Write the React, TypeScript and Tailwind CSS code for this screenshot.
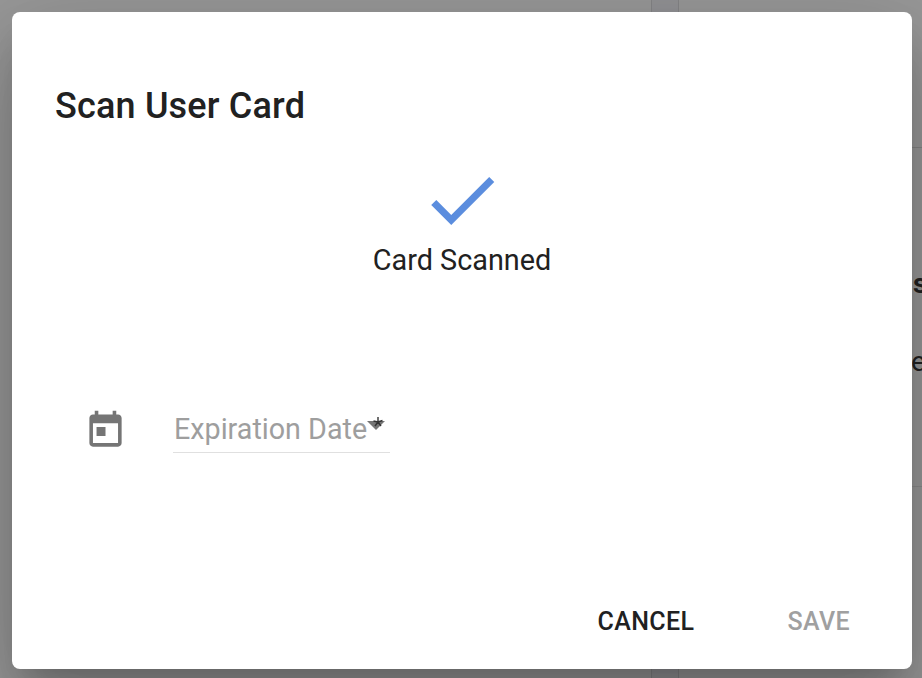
import clsx from 'clsx'

interface IconProperties {
    className?: string
}

function CheckIcon(props: IconProperties) {
    return (
        <svg viewBox="0 0 24 24" fill="currentColor" className={props.className}>
            <path d="M9 16.17 4.83 12l-1.42 1.41L9 19 21 7l-1.41-1.41z" />
        </svg>
    )
}

function TodayIcon(props: IconProperties) {
    return (
        <svg viewBox="0 0 24 24" fill="currentColor" className={props.className}>
            <path d="M19 3h-1V1h-2v2H8V1H6v2H5c-1.11 0-1.99.9-1.99 2L3 19c0 1.1.89 2 2 2h14c1.1 0 2-.9 2-2V5c0-1.1-.9-2-2-2zm0 16H5V8h14v11zM7 10h5v5H7z" />
        </svg>
    )
}

const actions = [
    { name: 'CANCEL', disabled: false },
    { name: 'SAVE', disabled: true },
]

// Page behind the dialog, already dimmed by the backdrop
function Backdrop() {
    return (
        <div className="absolute inset-0 flex bg-[#939396]" aria-hidden="true">
            <div className="w-[652px] border-r border-[#858587] bg-[#999999]" />
            <div className="ml-[26px] flex flex-1 flex-col items-end overflow-hidden border-l border-[#858587] bg-[#999999] text-[28px] leading-8 text-[#222222]">
                <div className="h-[148px] w-full border-b border-[#858585]" />
                <div className="h-[339px] w-full border-b border-[#8b8b8b] pl-[234px] pt-[120px]">
                    <div className="font-bold">s</div>
                    <div className="-ml-[2px] mt-[46px]">e</div>
                </div>
            </div>
        </div>
    )
}

export default function App() {
    return (
        <div className="relative h-[678px] w-[922px] overflow-hidden px-3 pt-3 font-['Roboto',sans-serif] text-[#212121]">
            <Backdrop />
            <div
                role="dialog"
                className="relative flex h-[657px] w-[900px] flex-col rounded-lg bg-white shadow-[0_22px_30px_-14px_rgba(0,0,0,0.2),0_48px_76px_6px_rgba(0,0,0,0.14),0_18px_92px_16px_rgba(0,0,0,0.12)]"
            >
                <h2 className="ml-[43px] mt-[73px] text-[36px] font-medium leading-[42px] tracking-[0.18px]">Scan User Card</h2>
                <div className="mt-[30px] flex flex-col items-center">
                    <CheckIcon className="size-[86px] text-[#5b8dde]" />
                    <p className="text-[28.8px] leading-[34px]">Card Scanned</p>
                </div>
                <div className="mt-[119px] flex pl-[72px]">
                    <TodayIcon className="mt-[13px] size-[43px] text-[#757575]" />
                    <div className="ml-[46px] flex h-[57px] w-[217px] items-start border-b border-[#e0e0e0] pt-[16px] text-[#9e9e9e]">
                        <span className="whitespace-nowrap pl-px text-[28.7px] leading-[34px]">Expiration Date</span>
                        <div className="relative">
                            <svg viewBox="0 0 18 9" className="mt-[9px] h-[9px] w-[18px] text-[#757575]">
                                <path d="M0 0h18L9 9z" fill="currentColor" />
                            </svg>
                            <svg viewBox="0 0 10 10" className="absolute left-[6px] top-[5px] size-[10px] text-[#333]">
                                <path d="M5 0v5M0.5 4 5 5l4.5-1.5M5 5 2 9M5 5l3 4" fill="none" stroke="currentColor" strokeWidth="1.4" />
                            </svg>
                        </div>
                    </div>
                </div>
                <div className="mt-auto flex justify-end gap-[93px] pb-[31px] pr-[62px]">
                    {actions.map((action) => (
                        <button
                            key={action.name}
                            disabled={action.disabled}
                            className={clsx('text-[25px] font-medium leading-8 tracking-[0.4px]', action.disabled && 'text-[#a0a0a0]')}
                        >
                            {action.name}
                        </button>
                    ))}
                </div>
            </div>
        </div>
    )
}
